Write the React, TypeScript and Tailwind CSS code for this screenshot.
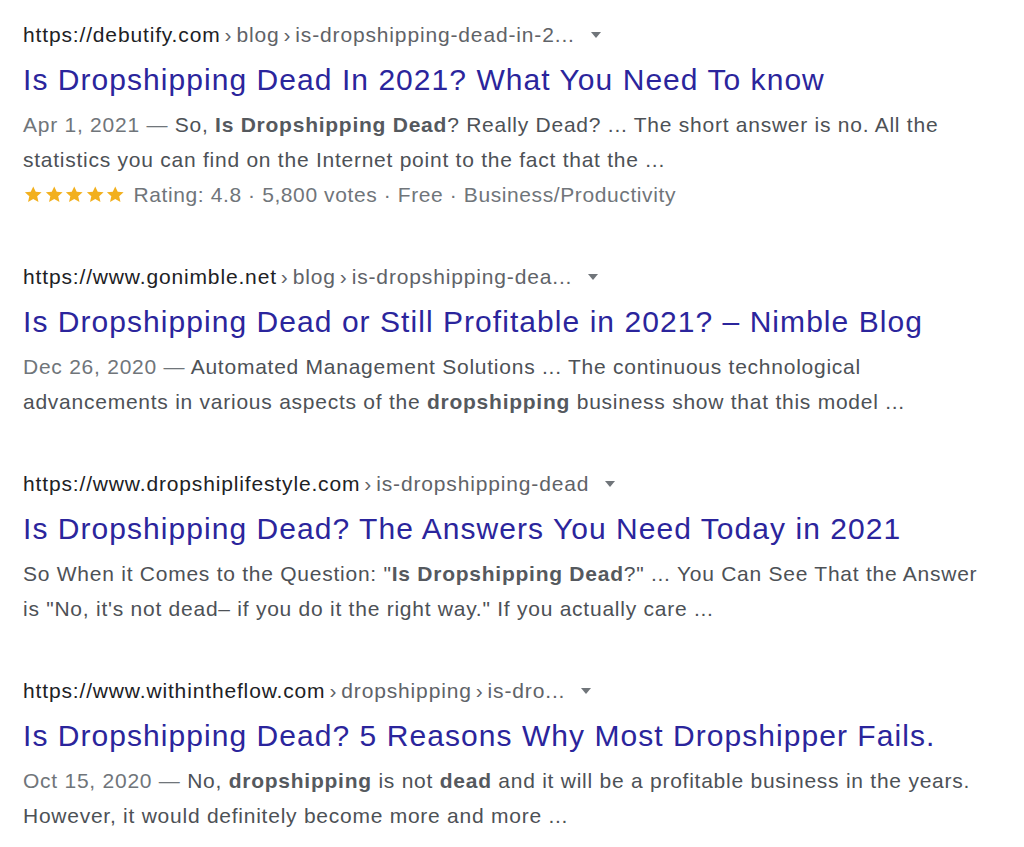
import type { ReactNode } from "react";

type Result = {
  site: string;
  crumbs: string[];
  title: string;
  lines: ReactNode[];
  rating?: boolean;
};

const results: Result[] = [
  {
    site: "https://debutify.com",
    crumbs: ["blog", "is-dropshipping-dead-in-2..."],
    title: "Is Dropshipping Dead In 2021? What You Need To know",
    lines: [
      <>
        <span className="text-[#70757a]">Apr 1, 2021 — </span>So, <b>Is Dropshipping Dead</b>? Really Dead? ... The short answer is no. All the
      </>,
      <>statistics you can find on the Internet point to the fact that the ...</>,
    ],
    rating: true,
  },
  {
    site: "https://www.gonimble.net",
    crumbs: ["blog", "is-dropshipping-dea..."],
    title: "Is Dropshipping Dead or Still Profitable in 2021? – Nimble Blog",
    lines: [
      <>
        <span className="text-[#70757a]">Dec 26, 2020 — </span>Automated Management Solutions ... The continuous technological
      </>,
      <>
        advancements in various aspects of the <b>dropshipping</b> business show that this model ...
      </>,
    ],
  },
  {
    site: "https://www.dropshiplifestyle.com",
    crumbs: ["is-dropshipping-dead"],
    title: "Is Dropshipping Dead? The Answers You Need Today in 2021",
    lines: [
      <>
        So When it Comes to the Question: "<b>Is Dropshipping Dead</b>?" ... You Can See That the Answer
      </>,
      <>is "No, it's not dead– if you do it the right way." If you actually care ...</>,
    ],
  },
  {
    site: "https://www.withintheflow.com",
    crumbs: ["dropshipping", "is-dro..."],
    title: "Is Dropshipping Dead? 5 Reasons Why Most Dropshipper Fails.",
    lines: [
      <>
        <span className="text-[#70757a]">Oct 15, 2020 — </span>No, <b>dropshipping</b> is not <b>dead</b> and it will be a profitable business in the years.
      </>,
      <>However, it would definitely become more and more ...</>,
    ],
  },
];

function Stars() {
  return (
    <span className="mr-[8px] inline-flex items-center">
      {[0, 1, 2, 3, 4].map((i) => (
        <svg key={i} viewBox="0 0 24 24" className="h-[21px] w-[20.5px] fill-[#f2b01e]">
          <path d="M12 2.5l2.9 6.3 6.9.7-5.2 4.6 1.5 6.8L12 17.4l-6.1 3.5 1.5-6.8-5.2-4.6 6.9-.7z" />
        </svg>
      ))}
    </span>
  );
}

function ResultBlock({ r }: { r: Result }) {
  return (
    <div className="flex flex-col">
      <div className="flex h-[22px] items-center whitespace-nowrap text-[21px] leading-[22px] tracking-[0.85px] text-[#202124]">
        <span>{r.site}</span>
        {r.crumbs.map((c) => (
          <span key={c} className="text-[#5f6368]">
            <span className="mx-[4px]">›</span>
            {c}
          </span>
        ))}
        <svg viewBox="0 0 10 6" className="ml-[16px] h-[6px] w-[10px] fill-[#70757a]">
          <path d="M0 0h10L5 6z" />
        </svg>
      </div>
      <div className="mt-[17px] h-[34px] whitespace-nowrap text-[30px] leading-[34px] tracking-[1.05px] text-[#2b259c]">
        {r.title}
      </div>
      <div className="mt-[10px] text-[21px] leading-[35px] tracking-[0.75px] text-[#4d5156]">
        {r.lines.map((l, i) => (
          <div key={i} className="whitespace-nowrap [&_b]:font-bold [&_b]:text-[#55595e]">
            {l}
          </div>
        ))}
        {r.rating && (
          <div className="flex items-center whitespace-nowrap tracking-[0.6px] text-[#70757a]">
            <Stars />
            Rating: 4.8 · 5,800 votes · Free · Business/Productivity
          </div>
        )}
      </div>
    </div>
  );
}

export default function App() {
  return (
    <div className="min-h-[847px] w-[1024px] bg-white pl-[23px] pt-[24px] font-['Liberation_Sans',Arial,sans-serif]">
      <div className="flex flex-col gap-[54px]">
        {results.map((r) => (
          <ResultBlock key={r.site} r={r} />
        ))}
      </div>
    </div>
  );
}
